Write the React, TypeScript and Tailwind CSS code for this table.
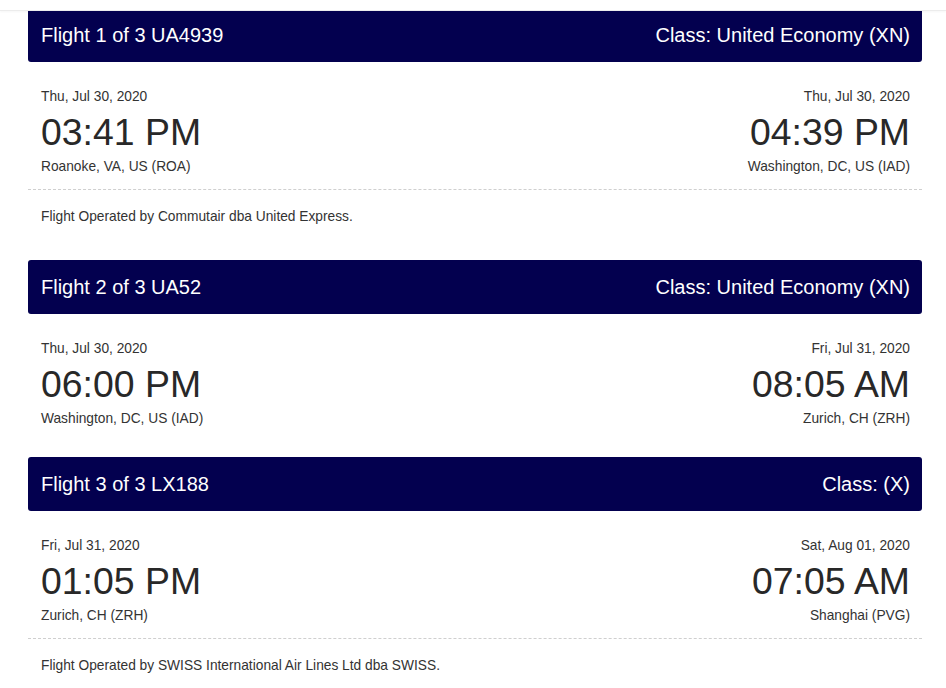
import React from "react";

type Flight = {
  title: string;
  cls: string;
  depDate: string;
  depTime: string;
  depCity: string;
  arrDate: string;
  arrTime: string;
  arrCity: string;
  operated?: string;
};

const flights: Flight[] = [
  {
    title: "Flight 1 of 3 UA4939",
    cls: "Class: United Economy (XN)",
    depDate: "Thu, Jul 30, 2020",
    depTime: "03:41 PM",
    depCity: "Roanoke, VA, US (ROA)",
    arrDate: "Thu, Jul 30, 2020",
    arrTime: "04:39 PM",
    arrCity: "Washington, DC, US (IAD)",
    operated: "Flight Operated by Commutair dba United Express.",
  },
  {
    title: "Flight 2 of 3 UA52",
    cls: "Class: United Economy (XN)",
    depDate: "Thu, Jul 30, 2020",
    depTime: "06:00 PM",
    depCity: "Washington, DC, US (IAD)",
    arrDate: "Fri, Jul 31, 2020",
    arrTime: "08:05 AM",
    arrCity: "Zurich, CH (ZRH)",
  },
  {
    title: "Flight 3 of 3 LX188",
    cls: "Class: (X)",
    depDate: "Fri, Jul 31, 2020",
    depTime: "01:05 PM",
    depCity: "Zurich, CH (ZRH)",
    arrDate: "Sat, Aug 01, 2020",
    arrTime: "07:05 AM",
    arrCity: "Shanghai (PVG)",
    operated: "Flight Operated by SWISS International Air Lines Ltd dba SWISS.",
  },
];

function Segment({ f, first }: { f: Flight; first: boolean }) {
  return (
    <div>
      <div
        className={
          "h-[54px] bg-[#03004f] text-white flex items-center justify-between pl-[13px] pr-[12px] text-[20px] rounded-[3px] " +
          (first ? "-mt-[3px]" : "")
        }
      >
        <span>{f.title}</span>
        <span>{f.cls}</span>
      </div>
      <div className="pt-[25px]">
        <div className="flex justify-between pl-[13px] pr-[12px]">
          <div className="flex flex-col">
            <div className="text-[13.75px] leading-[19px] text-[#333]">{f.depDate}</div>
            <div className="text-[37.4px] leading-[52px] text-[#282828]">{f.depTime}</div>
            <div className="text-[13.75px] leading-[18px] text-[#333]">{f.depCity}</div>
          </div>
          <div className="flex flex-col items-end text-right">
            <div className="text-[13.75px] leading-[19px] text-[#333]">{f.arrDate}</div>
            <div className="text-[37.4px] leading-[52px] text-[#282828]">{f.arrTime}</div>
            <div className="text-[13.75px] leading-[18px] text-[#333]">{f.arrCity}</div>
          </div>
        </div>
        {f.operated ? (
          <div className="mt-[13px] border-t border-dashed border-[#cfcfcf] pt-[16px] pb-[32px] pl-[13px]">
            <div className="text-[13.75px] leading-[22px] text-[#333]">{f.operated}</div>
          </div>
        ) : (
          <div className="h-[29px]" />
        )}
      </div>
    </div>
  );
}

export default function App() {
  return (
    <div
      className="w-[946px] h-[688px] overflow-hidden bg-white flex flex-col"
      style={{ fontFamily: '"Liberation Sans", Arial, sans-serif' }}
    >
      <div className="h-[11px] shrink-0 bg-white border-b border-[#ececec] shadow-[0_1px_2px_rgba(0,0,0,0.04)]" />
      <div className="flex-1 overflow-hidden px-[28px] w-[950px]">
        <div className="w-[894px]">
          {flights.map((f, i) => (
            <Segment key={i} f={f} first={i === 0} />
          ))}
        </div>
      </div>
    </div>
  );
}
